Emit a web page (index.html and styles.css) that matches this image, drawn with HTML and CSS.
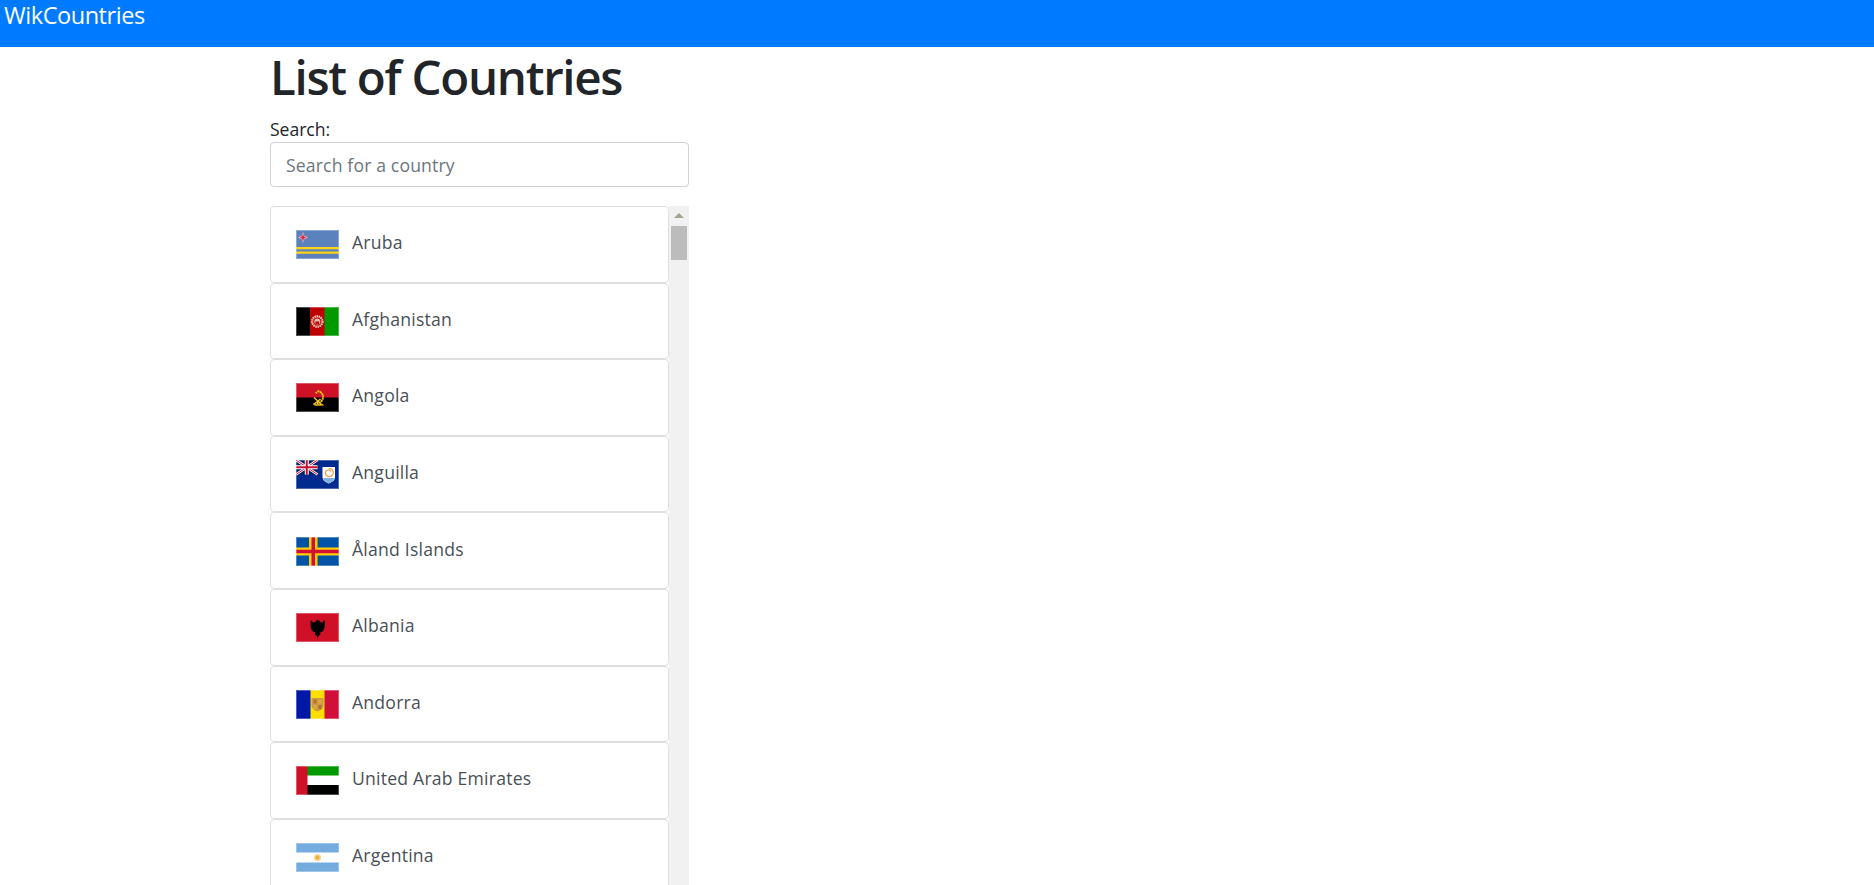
FILE: index.html
```html
<!DOCTYPE html>
<html lang="en">
<head>
<meta charset="utf-8">
<title>WikCountries</title>
<link rel="stylesheet" href="styles.css">
</head>
<body>
<nav class="navbar"><a class="brand">WikCountries</a></nav>
<main class="container">
  <h1 class="title">List of Countries</h1>
  <label class="search-label" for="search">Search:</label>
  <input class="search-input" id="search" type="text" placeholder="Search for a country">
  <div class="list-wrap">
    <ul class="country-list">
      <li class="country">
        <svg class="flag" viewBox="0 0 43 29"><rect width="43" height="29" fill="#5b82bc"/><rect y="17" width="43" height="2.300" fill="#fcd116"/><rect y="21.500" width="43" height="2.300" fill="#fcd116"/><path d="M7 2l1.200 3.800 3.800 1.700-3.800 1.700-1.200 3.800-1.200-3.800-3.800-1.700 3.800-1.700z" fill="#f3b7c0"/><path d="M7 3.800l.9 2.800 2.300.9-2.300.9-.9 2.800-.9-2.800-2.300-.9 2.300-.9z" fill="#e2203a"/></svg>
        <span>Aruba</span>
      </li>
      <li class="country">
        <svg class="flag" viewBox="0 0 43 29"><rect width="14.500" height="29" fill="#000"/><rect x="14" width="15" height="29" fill="#be0000"/><rect x="28.500" width="14.500" height="29" fill="#009900"/><circle cx="21.300" cy="14.500" r="5.200" fill="none" stroke="#eec9b8" stroke-width="2.200" stroke-dasharray="1.500 .6"/><circle cx="21.300" cy="14.500" r="3" fill="#e9b7a6"/><path d="M19.500 14.500h3.600v2.500h-3.600z" fill="#be0000"/></svg>
        <span>Afghanistan</span>
      </li>
      <li class="country">
        <svg class="flag" viewBox="0 0 43 29"><rect width="43" height="15" fill="#ce1126"/><rect y="14.500" width="43" height="14.500" fill="#000"/><path d="M21.500 8a6 6 0 0 1 3.500 10.500c-1 1-2.500 1.500-4 1.500" fill="none" stroke="#f9c916" stroke-width="1.800" stroke-dasharray="2 .4"/><path d="M19 9.500l1.500-1 1 1.500-1 1z" fill="#f9c916"/><path d="M17.500 21.500l7-5.500M18 14.500l8 7.500" stroke="#f9c916" stroke-width="1.300" fill="none"/><path d="M17 20.500l2 2.500 9-.5-1-1.500z" fill="#f9c916" opacity=".8"/></svg>
        <span>Angola</span>
      </li>
      <li class="country">
        <svg class="flag" viewBox="0 0 43 29"><rect width="43" height="29" fill="#012a8f"/><rect width="21.500" height="14.500" fill="#012169"/><path d="M0 0l21.500 14.500M21.500 0L0 14.500" stroke="#fff" stroke-width="2.600"/><path d="M0 0l21.500 14.500M21.500 0L0 14.500" stroke="#c8102e" stroke-width="1"/><path d="M10.750 0v14.500M0 7.250h21.500" stroke="#fff" stroke-width="4"/><path d="M10.750 0v14.500M0 7.250h21.500" stroke="#c8102e" stroke-width="2"/><path d="M26.500 7h12.500v10c0 4-3.500 5-6.250 6.500-2.750-1.500-6.250-2.500-6.250-6.500z" fill="#fff"/><path d="M27 18h11.500c-.5 3-3.300 4-5.750 5.500-2.450-1.500-5.250-2.500-5.750-5.500z" fill="#7fb2de"/><path d="M33 8.500a4 4 0 1 1-3.500 5.500M32.500 16a3 3 0 1 1 2.500-4.500" fill="none" stroke="#ee9a3c" stroke-width="1.200"/></svg>
        <span>Anguilla</span>
      </li>
      <li class="country">
        <svg class="flag" viewBox="0 0 43 29"><rect width="43" height="29" fill="#0053a5"/><rect x="13" width="8.500" height="29" fill="#ffce00"/><rect y="10.500" width="43" height="8" fill="#ffce00"/><rect x="15.500" width="3.500" height="29" fill="#d21034"/><rect y="12.750" width="43" height="3.500" fill="#d21034"/></svg>
        <span>Åland Islands</span>
      </li>
      <li class="country">
        <svg class="flag" viewBox="0 0 43 29"><rect width="43" height="29" fill="#d01027"/><path d="M21.500 6.500l1 1.500.8-1 .8 2.500c1-1 2-1.500 1.400 1 1-1.500 2.500-3 3-3.500l.5 2.500-.4 1.500.4 1.300-.6 1.200.4 1.200-1 1.300.1 1.200-1.200.5-.6 1.200-1.100-.2-1 .6.900 1.300-1 .5.400 1.200-1.200-.3-.6 1.700-.8 1.300-.8-1.300-.6-1.700-1.200.3.400-1.200-1-.5.900-1.300-1-.6-1.100.2-.6-1.200-1.200-.5.100-1.200-1-1.300.4-1.200-.6-1.200.4-1.300-.4-1.500.5-2.500c.5.500 2 2 3 3.500-.6-2.500.4-2 1.400-1l.8-2.500.8 1z" fill="#000"/></svg>
        <span>Albania</span>
      </li>
      <li class="country">
        <svg class="flag" viewBox="0 0 43 29"><rect width="15" height="29" fill="#0018a8"/><rect x="14.500" width="14.500" height="29" fill="#fedf00"/><rect x="28.500" width="14.500" height="29" fill="#d0103a"/><path d="M15.500 8h12v7c0 4-3.500 5.500-6 6.500-2.500-1-6-2.500-6-6.500z" fill="#c79a4a"/><rect x="17.500" y="9.500" width="3" height="4" fill="#c8682f"/><rect x="22.500" y="9.500" width="3" height="4" fill="#e0ae2e"/><rect x="17.500" y="15" width="3" height="4" fill="#e0ae2e"/><rect x="22.500" y="15" width="3" height="4" fill="#b0703a"/></svg>
        <span>Andorra</span>
      </li>
      <li class="country">
        <svg class="flag" viewBox="0 0 43 29"><rect width="43" height="10" fill="#009a00"/><rect y="9.500" width="43" height="10" fill="#fff"/><rect y="19" width="43" height="10" fill="#000"/><rect width="11.500" height="29" fill="#ce1126"/></svg>
        <span>United Arab Emirates</span>
      </li>
      <li class="country">
        <svg class="flag" viewBox="0 0 43 29"><rect width="43" height="29" fill="#74acdf"/><rect y="9.500" width="43" height="10" fill="#fff"/><circle cx="21.500" cy="14.500" r="3.500" fill="#f6d28a"/><circle cx="21.500" cy="14.500" r="2" fill="#efb03a"/></svg>
        <span>Argentina</span>
      </li>
    </ul>
    <div class="scrollbar" aria-hidden="true">
      <div class="scroll-arrow"></div>
      <div class="scroll-thumb"></div>
    </div>
  </div>
</main>
</body>
</html>
```
FILE: styles.css
```css
* { box-sizing: border-box; }
html, body { margin: 0; height: 885px; overflow: hidden; background: #fff; }
body {
  font-family: "Open Sans", "Noto Sans", "Liberation Sans", sans-serif;
  color: #212529;
  display: flex;
  flex-direction: column;
}
.navbar {
  height: 47px;
  flex: none;
  background: #007bff;
  padding: 0 4px;
}
.brand {
  display: block;
  color: #fff;
  font-size: 23.500px;
  line-height: 30px;
  letter-spacing: -0.45px;
}
.container {
  width: 419px;
  margin-left: 270px;
  flex: 1;
  min-height: 0;
  display: flex;
  flex-direction: column;
}
.title {
  margin: 0;
  font-size: 47.500px;
  font-weight: 600;
  line-height: 60px;
  letter-spacing: -1.3px;
}
.search-label {
  display: block;
  font-size: 17.600px;
  line-height: 24px;
  height: 35px;
  padding-top: 10px;
  letter-spacing: -0.05px;
}
.search-input {
  display: block;
  width: 100%;
  height: 45px;
  padding: 0 15px;
  border: 1px solid #ced4da;
  border-radius: 4px;
  font: inherit;
  font-size: 17.600px;
  letter-spacing: 0.15px;
  color: #495057;
  outline: none;
}
.search-input::placeholder { color: #6c757d; opacity: 1; }
.list-wrap {
  margin-top: 19px;
  flex: 1;
  min-height: 0;
  display: flex;
  overflow: hidden;
}
.country-list {
  flex: 1;
  min-width: 0;
  list-style: none;
  margin: 0;
  padding: 0;
}
.country {
  height: 76.600px;
  display: flex;
  align-items: center;
  gap: 13px;
  padding: 0 25px;
  border: 1px solid #dfdfdf;
  border-radius: 4px;
  font-size: 17.600px;
  letter-spacing: 0.22px;
  color: #495057;
}
.flag {
  width: 43px;
  height: 29px;
  flex: none;
  margin-top: 1px;
  outline: 1px solid rgba(255, 255, 255, 0.3);
  outline-offset: -1px;
}
.country span { margin-top: -4px; }
.scrollbar {
  width: 20px;
  flex: none;
  background: #f1f1f1;
  padding: 2px;
  display: flex;
  flex-direction: column;
  align-items: center;
}
.scroll-arrow {
  width: 0;
  height: 0;
  margin: 5px 0 8px;
  border-left: 5px solid transparent;
  border-right: 5px solid transparent;
  border-bottom: 5px solid #a3a38f;
}
.scroll-thumb {
  width: 16px;
  height: 34px;
  background: #bcbcbc;
}
```
